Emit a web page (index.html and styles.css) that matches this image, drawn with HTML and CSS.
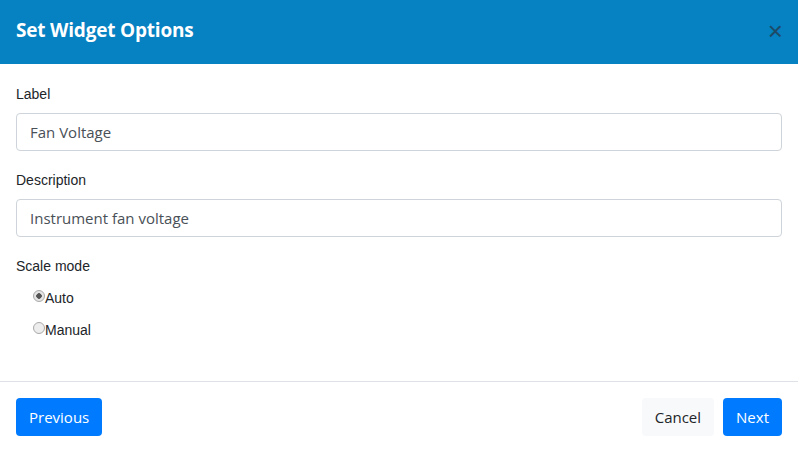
FILE: index.html
```html
<!DOCTYPE html>
<html lang="en">
<head>
  <meta charset="UTF-8" />
  <title>Set Widget Options</title>
  <link rel="stylesheet" href="styles.css">
</head>
<body>
  <div class="modal">
    <div class="modal-header">
      <h5 class="modal-title">Set Widget Options</h5>
      <button class="close" type="button">&times;</button>
    </div>

    <div class="modal-body">
      <div class="form-group">
        <label for="label">Label</label>
        <input type="text" id="label" class="form-control" value="Fan Voltage"/>
      </div>
      <div class="form-group">
        <label for="desc">Description</label>
        <input type="text" id="desc" class="form-control" value="Instrument fan voltage"/>
      </div>
      <div class="form-group">
        <label>Scale mode</label>
        <div class="radio"><input type="radio" name="scale" checked/>Auto</div>
        <div class="radio"><input type="radio" name="scale"/>Manual</div>
      </div>
    </div>

    <div class="modal-footer">
      <button class="btn btn-primary">Previous</button>
      <div class="spacer"></div>
      <button class="btn btn-light">Cancel</button>
      <button class="btn btn-primary">Next</button>
    </div>
  </div>
</body>
</html>
```

FILE: styles.css
```css
body { margin: 0; font-family: "Open Sans", "Noto Sans", sans-serif; background: white; color: #212529; }
.modal { width: 798px; height: 452px; display: flex; flex-direction: column; }
.modal-header { background: #0681c2; height: 64px; display: flex; align-items: center; padding: 0 16px; box-sizing: border-box; }
.modal-title { margin: 0 0 4px; color: white; font-size: 19px; font-weight: 700; flex: 1; letter-spacing: -0.2px; }
.close { background: none; border: none; font-size: 26px; line-height: 1; color: #1d4a66; padding: 0; margin-right: -1px; margin-bottom: 2px; font-family: "Liberation Sans", sans-serif; cursor: pointer; }
.modal-body { padding: 21px 16px 0; flex: 1; }
.form-group { margin-bottom: 20px; }
label { display: block; font-family: "Liberation Sans", Arial, sans-serif; font-size: 14px; color: #212529; margin: 0 0 9px; line-height: 19px; }
.form-control { display: block; width: 100%; box-sizing: border-box; height: 38px; padding: 6px 13px; font-size: 15px; font-family: "Open Sans", sans-serif; color: #495057; border: 1px solid #ced4da; border-radius: 4px; margin: 0; }
.radio { font-family: "Liberation Sans", Arial, sans-serif; font-size: 14px; color: #212529; padding-left: 17px; height: 20px; display: flex; align-items: center; margin-top: 12px; }
.radio input { appearance: none; width: 12px; height: 12px; margin: 0; border: 1px solid #a9a9a9; border-radius: 50%; background: #ededed; box-sizing: border-box; position: relative; top: -2px; }
.radio input:checked { background: radial-gradient(circle, #555 0 2.5px, #e4e4e4 3px); }
.modal-footer { border-top: 1px solid #dee2e6; height: 71px; display: flex; align-items: center; padding: 0 16px; gap: 9px; box-sizing: border-box; }
.spacer { flex: 1; }
.btn { font-family: "Open Sans", sans-serif; font-size: 15px; height: 38px; padding: 0 13px; border-radius: 4px; border: none; cursor: pointer; }
.btn-primary { background: #007bff; color: white; }
.btn-light { background: #f8f9fa; color: #212529; }
```
